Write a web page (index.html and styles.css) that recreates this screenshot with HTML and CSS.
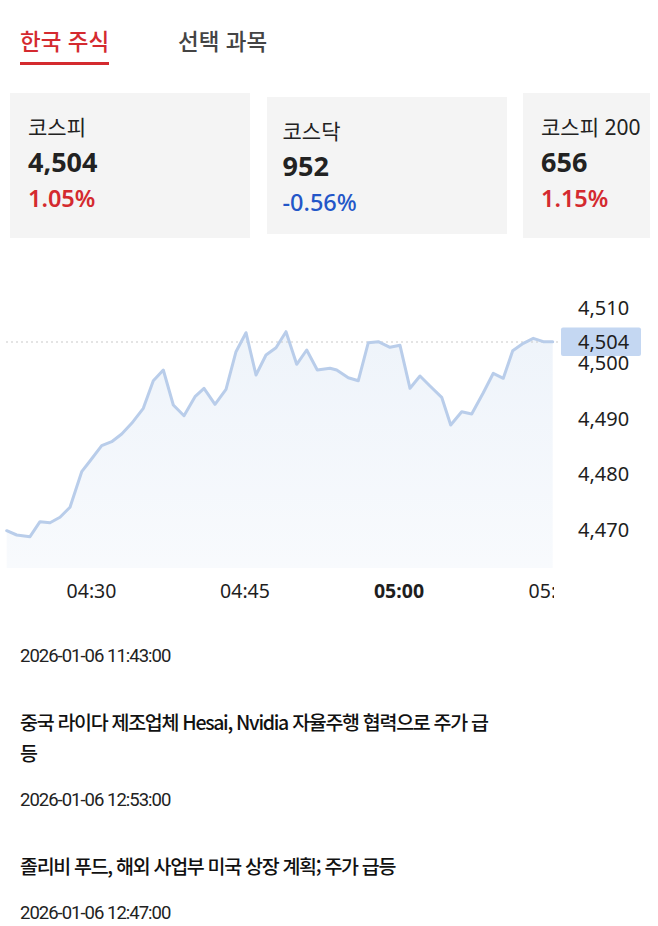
FILE: index.html
```html
<!DOCTYPE html>
<html lang="ko">
<head>
<meta charset="utf-8">
<title>한국 주식</title>
<link rel="stylesheet" href="styles.css">
</head>
<body>
<nav class="tabs">
  <div class="tab tab-active">한국 주식</div>
  <div class="tab">선택 과목</div>
</nav>

<section class="cards">
  <div class="card">
    <div class="card-label">코스피</div>
    <div class="card-value">4,504</div>
    <div class="card-change up">1.05%</div>
  </div>
  <div class="card card-pressed">
    <div class="card-label">코스닥</div>
    <div class="card-value">952</div>
    <div class="card-change down">-0.56%</div>
  </div>
  <div class="card">
    <div class="card-label">코스피 200</div>
    <div class="card-value">656</div>
    <div class="card-change up">1.15%</div>
  </div>
</section>

<svg class="chart" width="658" height="330" viewBox="0 0 658 330" xmlns="http://www.w3.org/2000/svg">
  <defs>
    <linearGradient id="fillGrad" x1="0" y1="50" x2="0" y2="288" gradientUnits="userSpaceOnUse">
      <stop offset="0" stop-color="#b9cfeb" stop-opacity="0.24"/>
      <stop offset="1" stop-color="#b9cfeb" stop-opacity="0.1"/>
    </linearGradient>
    <clipPath id="plotClip">
      <rect x="0" y="0" width="554" height="330"/>
    </clipPath>
  </defs>
  <polygon class="area" fill="url(#fillGrad)" points="6.7,250.7 16.7,255 30,256.7 40,241.7 50,242.7 60,237.3 70,227.3 81.7,191.7 90,181 101.7,165.7 111.7,161.7 121.7,154 131.7,143.3 143.3,128.3 153.3,100.7 163.3,90 173.3,125 184,135.7 195,116.7 204,108.3 215,124.3 226,109.3 236,71.7 246,52.7 256,95 266,75 276,67.7 286,51.7 296.7,84.3 306.7,70 317.3,90 330,88.3 336.7,90 348.3,97.7 358.3,100.7 368.3,62.7 378.3,61.7 390,67.3 400,65.3 410,108.3 420,96 430,106 441.7,117.3 450.7,145 461.7,131.7 471.7,134 483.3,112.7 493.3,93.3 503.3,98.3 512.7,70.7 523.3,63.3 533.3,58.3 543.3,61.7 552.7,61.7 552.7,288 6.7,288"/>
  <line class="ref-line" x1="6" y1="62" x2="561" y2="62"/>
  <polyline class="price-line" points="6.7,250.7 16.7,255 30,256.7 40,241.7 50,242.7 60,237.3 70,227.3 81.7,191.7 90,181 101.7,165.7 111.7,161.7 121.7,154 131.7,143.3 143.3,128.3 153.3,100.7 163.3,90 173.3,125 184,135.7 195,116.7 204,108.3 215,124.3 226,109.3 236,71.7 246,52.7 256,95 266,75 276,67.7 286,51.7 296.7,84.3 306.7,70 317.3,90 330,88.3 336.7,90 348.3,97.7 358.3,100.7 368.3,62.7 378.3,61.7 390,67.3 400,65.3 410,108.3 420,96 430,106 441.7,117.3 450.7,145 461.7,131.7 471.7,134 483.3,112.7 493.3,93.3 503.3,98.3 512.7,70.7 523.3,63.3 533.3,58.3 543.3,61.7 552.7,61.7"/>

  <rect class="price-tag" x="561" y="47.5" width="80" height="28.5" rx="2"/>

  <text class="y-label" x="578" y="35">4,510</text>
  <text class="y-label" x="578" y="89.8">4,500</text>
  <text class="y-label" x="578" y="145.5">4,490</text>
  <text class="y-label" x="578" y="201.3">4,480</text>
  <text class="y-label" x="578" y="256.8">4,470</text>
  <text class="y-label" x="578" y="69">4,504</text>

  <g clip-path="url(#plotClip)">
    <text class="x-label" x="91.5" y="318">04:30</text>
    <text class="x-label" x="245" y="318">04:45</text>
    <text class="x-label x-label-strong" x="399" y="318">05:00</text>
    <text class="x-label" x="553.5" y="318">05:15</text>
  </g>
</svg>

<section class="news">
  <div class="news-date news-date-first">2026-01-06 11:43:00</div>
  <article class="news-item">
    <h3 class="news-title">중국 라이다 제조업체 Hesai, Nvidia 자율주행 협력으로 주가 급등</h3>
    <div class="news-date">2026-01-06 12:53:00</div>
  </article>
  <article class="news-item">
    <h3 class="news-title">졸리비 푸드, 해외 사업부 미국 상장 계획; 주가 급등</h3>
    <div class="news-date">2026-01-06 12:47:00</div>
  </article>
</section>
</body>
</html>
```

FILE: styles.css
```css
* {
  box-sizing: border-box;
}

html, body {
  margin: 0;
  padding: 0;
  background: #ffffff;
}

body {
  width: 658px;
  height: 926px;
  overflow: hidden;
  font-family: "Noto Sans", "Noto Sans CJK KR", sans-serif;
  color: #222222;
}

/* Tabs */
.tabs {
  display: flex;
  gap: 69px;
  padding: 0 20px;
}

.tab {
  padding-top: 25px;
  padding-bottom: 7px;
  line-height: 30px;
  font-family: "Noto Sans CJK KR", sans-serif;
  font-size: 22.5px;
  font-weight: 500;
  color: #444444;
  border-bottom: 3px solid transparent;
}

.tab-active {
  color: #d42a2f;
  border-bottom-color: #d42a2f;
}

/* Index cards */
.cards {
  display: flex;
  align-items: flex-start;
  gap: 16.5px;
  width: 650px;
  margin-top: 28px;
  padding-left: 10px;
  overflow: hidden;
}

.card {
  flex: 0 0 240px;
  height: 145px;
  padding: 20px 18px 0;
  background: #f4f4f4;
}

.card-pressed {
  margin-top: 4px;
  height: 137px;
  padding-left: 16px;
}

.card-label {
  font-family: "Noto Sans", "Noto Sans CJK KR", sans-serif;
  font-size: 21px;
  line-height: 28px;
  color: #222222;
  white-space: nowrap;
}

.card-value {
  margin-top: 3px;
  font-size: 27px;
  font-weight: 700;
  line-height: 36px;
  color: #222222;
}

.card-change {
  font-size: 23.5px;
  font-weight: 600;
  line-height: 36px;
}

.up {
  color: #d42a2f;
}

.down {
  color: #2356c8;
  font-weight: 500;
}

/* Chart */
.chart {
  display: block;
  margin-top: 42px;
}

.price-line {
  fill: none;
  stroke: #b9cdea;
  stroke-width: 3;
  stroke-linejoin: round;
  stroke-linecap: round;
}

.ref-line {
  stroke: #c9c9c9;
  stroke-width: 1;
  stroke-dasharray: 2 3;
}

.price-tag {
  fill: #c4d7f2;
}

.y-label {
  font-family: "Noto Sans", sans-serif;
  font-size: 20px;
  fill: #1e1e1e;
}

.x-label {
  font-family: "Noto Sans", sans-serif;
  font-size: 19.5px;
  fill: #1e1e1e;
  text-anchor: middle;
}

.x-label-strong {
  font-weight: 700;
}

/* News */
.news {
  padding: 0 20px;
  width: 523px;
}

.news-date {
  margin-top: 19px;
  font-family: "Roboto", sans-serif;
  font-size: 18.5px;
  line-height: 26px;
  letter-spacing: -1px;
  color: #222222;
}

.news-date-first {
  margin-top: 33px;
}

.news-title {
  margin: 37px 0 0;
  font-family: "Noto Sans CJK KR", sans-serif;
  font-size: 19.5px;
  font-weight: 500;
  line-height: 31px;
  letter-spacing: -1.3px;
  color: #111111;
  word-break: break-all;
}
```
